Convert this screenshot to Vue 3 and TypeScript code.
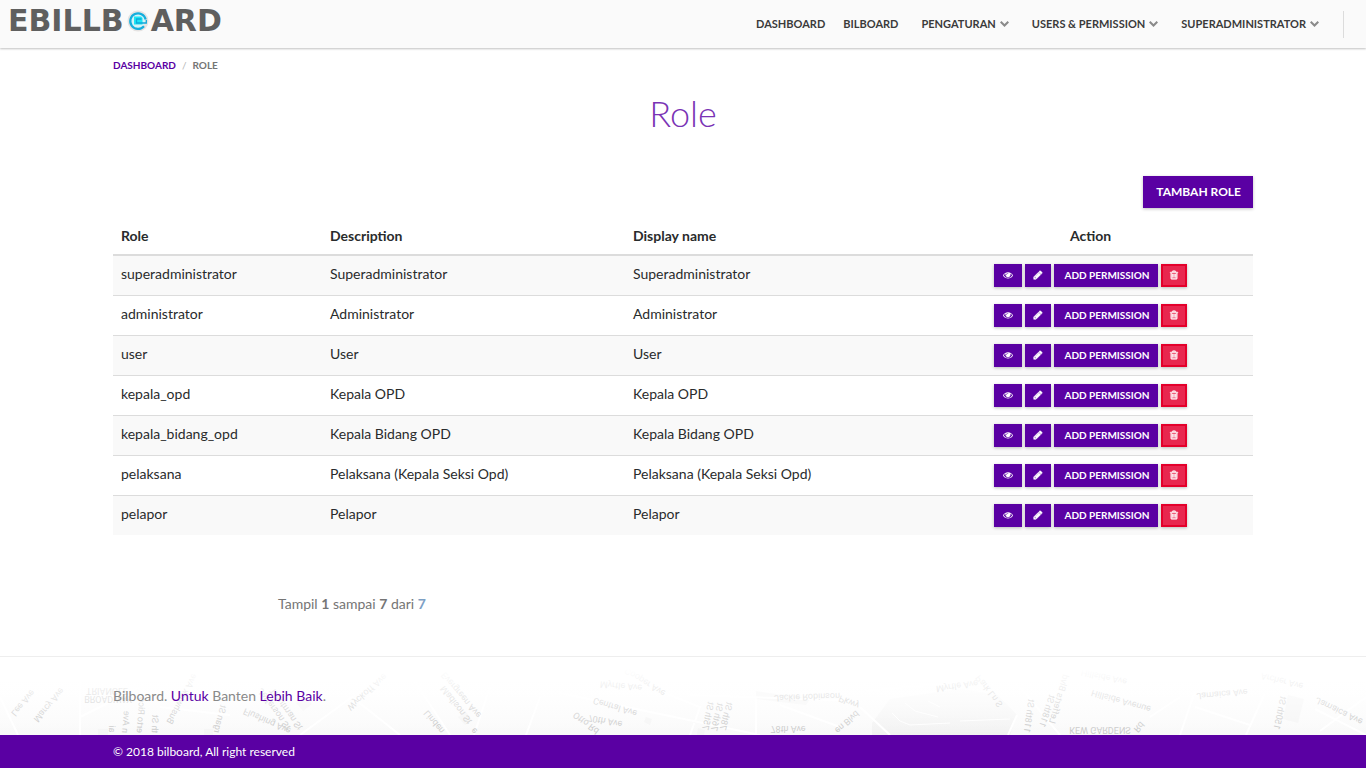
<script setup lang="ts">
interface NavItem {
  label: string
  menu: boolean
}

interface Role {
  name: string
  title: string
}

interface StreetLabel {
  text: string
  x: number
  y: number
  angle: number
}

const navItems: NavItem[] = [
  { label: 'DASHBOARD', menu: false },
  { label: 'BILBOARD', menu: false },
  { label: 'PENGATURAN', menu: true },
  { label: 'USERS & PERMISSION', menu: true },
  { label: 'SUPERADMINISTRATOR', menu: true },
]

const roles: Role[] = [
  { name: 'superadministrator', title: 'Superadministrator' },
  { name: 'administrator', title: 'Administrator' },
  { name: 'user', title: 'User' },
  { name: 'kepala_opd', title: 'Kepala OPD' },
  { name: 'kepala_bidang_opd', title: 'Kepala Bidang OPD' },
  { name: 'pelaksana', title: 'Pelaksana (Kepala Seksi Opd)' },
  { name: 'pelapor', title: 'Pelapor' },
]

const streets: StreetLabel[] = [
  { text: 'Lee Ave', x: 23, y: 46, angle: -50 },
  { text: 'Marcy Ave', x: 49, y: 48, angle: -50 },
  { text: 'TRIANGLE', x: 107, y: 34, angle: 0 },
  { text: 'BROADWAY', x: 108, y: 42, angle: 0 },
  { text: 'ai', x: 112, y: 72, angle: -88 },
  { text: 'n Ave', x: 126, y: 65, angle: -85 },
  { text: 'erto Rico', x: 141, y: 58, angle: -86 },
  { text: 'th St', x: 155, y: 67, angle: -88 },
  { text: 'Bushwick Ave', x: 182, y: 42, angle: -62 },
  { text: 'rgan St', x: 220, y: 62, angle: -76 },
  { text: 'Flushing Ave', x: 267, y: 64, angle: 24 },
  { text: 'Jefferson St', x: 274, y: 52, angle: 54 },
  { text: 'Troutman St', x: 286, y: 52, angle: 54 },
  { text: 'Wyckoff Ave', x: 367, y: 35, angle: -42 },
  { text: 'Linden', x: 434, y: 65, angle: 50 },
  { text: 'Evergreen Ave', x: 461, y: 38, angle: 50 },
  { text: 'Madison St', x: 456, y: 48, angle: 52 },
  { text: 'e', x: 474, y: 74, angle: 50 },
  { text: 'Myrtle Ave', x: 621, y: 29, angle: 5 },
  { text: 'Cooper Ave', x: 645, y: 25, angle: 32 },
  { text: 'Central Ave', x: 615, y: 50, angle: 17 },
  { text: '70th Ave', x: 605, y: 64, angle: 11 },
  { text: 'Otto Rd', x: 586, y: 66, angle: 38 },
  { text: '75th St', x: 708, y: 59, angle: -78 },
  { text: '76th St', x: 717, y: 60, angle: -76 },
  { text: '78th St', x: 726, y: 59, angle: -75 },
  { text: '78th Ave', x: 788, y: 72, angle: 0 },
  { text: 'Jackie Robinson', x: 807, y: 40, angle: -2 },
  { text: 'Pkwy', x: 849, y: 45, angle: 22 },
  { text: 'en Blvd', x: 847, y: 65, angle: -42 },
  { text: 'Myrtle Ave', x: 957, y: 29, angle: -8 },
  { text: 'Park Ln S', x: 989, y: 34, angle: 52 },
  { text: '118th St', x: 1029, y: 59, angle: -82 },
  { text: '118th St', x: 1047, y: 54, angle: -72 },
  { text: 'Lefferts Blvd', x: 1059, y: 42, angle: -74 },
  { text: 'Hillside Ave', x: 1104, y: 20, angle: 12 },
  { text: 'Hillside Avenue', x: 1121, y: 44, angle: 16 },
  { text: 'KEW GARDENS', x: 1100, y: 73, angle: 0 },
  { text: 'Rd', x: 1139, y: 70, angle: -48 },
  { text: 'Jamaica Ave', x: 1222, y: 37, angle: -5 },
  { text: 'Archer Ave', x: 1282, y: 24, angle: 14 },
  { text: '150th St', x: 1280, y: 56, angle: -78 },
  { text: 'Jamaica Ave', x: 1339, y: 54, angle: 26 },
]
</script>

<template>
  <div class="page">
    <header class="topbar">
      <a href="#" class="brand" aria-label="EBILLBOARD">
        <span>EBILLB</span>
        <svg class="brand-mark" viewBox="0 0 24 24" aria-hidden="true">
          <circle cx="12" cy="12" r="10.500" fill="#e6e3e2" />
          <circle cx="12" cy="12" r="7" fill="#d5f3f7" />
          <path d="M18 17.200A7.800 7.800 0 1 1 19.700 10.500" fill="none" stroke="#14aedd" stroke-width="2.200" />
          <path d="M8 7.500h7l1.500 1.500v6.500h-8.500z" fill="#1be6f5" />
          <path d="M15.500 10h-5v4h9.800v-3" fill="none" stroke="#0fa9da" stroke-width="1.300" />
        </svg>
        <span>ARD</span>
      </a>
      <nav class="menu" aria-label="Utama">
        <template v-for="item in navItems" :key="item.label">
          <button v-if="item.menu" type="button" class="menu-item">
            {{ item.label }}
            <svg viewBox="0 0 9 6" class="chevron" aria-hidden="true">
              <path d="M.7 .8L4.500 4.500L8.300 .8" fill="none" stroke="#8a8a8a" stroke-width="2.100" />
            </svg>
          </button>
          <a v-else href="#" class="menu-item">{{ item.label }}</a>
        </template>
        <span class="divider"></span>
      </nav>
    </header>

    <main class="container">
      <nav class="crumbs" aria-label="Breadcrumb">
        <a href="#">DASHBOARD</a>
        <span class="slash">/</span>
        <span>ROLE</span>
      </nav>
      <h1>Role</h1>
      <div class="toolbar">
        <button type="button" class="btn btn-add">TAMBAH ROLE</button>
      </div>

      <table>
        <colgroup>
          <col class="col-role" />
          <col class="col-text" />
          <col class="col-text" />
          <col />
        </colgroup>
        <thead>
          <tr>
            <th scope="col">Role</th>
            <th scope="col">Description</th>
            <th scope="col">Display name</th>
            <th scope="col" class="center">Action</th>
          </tr>
        </thead>
        <tbody>
          <tr v-for="role in roles" :key="role.name">
            <td>{{ role.name }}</td>
            <td>{{ role.title }}</td>
            <td>{{ role.title }}</td>
            <td>
              <div class="actions">
                <button type="button" class="btn btn-eye" aria-label="Lihat">
                  <svg viewBox="0 0 1792 1792" class="icon" aria-hidden="true"><path d="M1664 960q-152-236-381-353 61 104 61 225 0 185-131.500 316.500t-316.500 131.500-316.500-131.500-131.500-316.500q0-121 61-225-229 117-381 353 133 205 333.500 326.500t434.500 121.500 434.500-121.500 333.500-326.500zm-720-384q0-20-14-34t-34-14q-125 0-214.500 89.500t-89.500 214.500q0 20 14 34t34 14 34-14 14-34q0-86 61-147t147-61q20 0 34-14t14-34zm848 384q0 34-20 69-140 230-376.500 368.500t-499.500 138.500-499.500-139-376.500-368q-20-35-20-69t20-69q140-229 376.500-368t499.500-139 499.500 139 376.500 368q20 35 20 69z" /></svg>
                </button>
                <button type="button" class="btn btn-icon" aria-label="Ubah">
                  <svg viewBox="0 0 1792 1792" class="icon bold" aria-hidden="true"><path d="M491 1536l91-91-235-235-91 91v107h128v128h107zm523-928q0-22-22-22-10 0-17 7l-542 542q-7 7-7 17 0 22 22 22 10 0 17-7l542-542q7-7 7-17zm-54-192l416 416-832 832h-416v-416zm683 96q0 53-37 90l-166 166-416-416 166-165q36-38 90-38 53 0 91 38l235 234q37 39 37 91z" /></svg>
                </button>
                <button type="button" class="btn btn-permission">ADD PERMISSION</button>
                <button type="button" class="btn btn-icon btn-danger" aria-label="Hapus">
                  <svg viewBox="0 0 1792 1792" class="icon bold" aria-hidden="true"><path d="M704 736v576q0 14-9 23t-23 9h-64q-14 0-23-9t-9-23v-576q0-14 9-23t23-9h64q14 0 23 9t9 23zm256 0v576q0 14-9 23t-23 9h-64q-14 0-23-9t-9-23v-576q0-14 9-23t23-9h64q14 0 23 9t9 23zm256 0v576q0 14-9 23t-23 9h-64q-14 0-23-9t-9-23v-576q0-14 9-23t23-9h64q14 0 23 9t9 23zm128 724v-948h-896v948q0 22 7 40.500t14.500 27 10.500 8.500h832q3 0 10.500-8.500t14.500-27 7-40.500zm-672-1076h448l-48-117q-7-9-17-11h-317q-10 2-17 11zm928 32v64q0 14-9 23t-23 9h-96v948q0 83-47 143.500t-113 60.500h-832q-66 0-113-58.500t-47-141.500v-952h-96q-14 0-23-9t-9-23v-64q0-14 9-23t23-9h309l70-167q15-37 54-63t79-26h320q40 0 79 26t54 63l70 167h309q14 0 23 9t9 23z" /></svg>
                </button>
              </div>
            </td>
          </tr>
        </tbody>
      </table>

      <p class="summary">Tampil <b>1</b> sampai <b>7</b> dari <b class="total">7</b></p>
    </main>

    <footer>
      <div class="footer-top">
        <svg class="map" viewBox="0 0 1366 78" preserveAspectRatio="xMidYMax slice" aria-hidden="true">
          <defs>
            <linearGradient id="land" x1="0" y1="0" x2="0" y2="1">
              <stop offset="0.300" stop-color="#fff" />
              <stop offset="1" stop-color="#f9f9f9" />
            </linearGradient>
            <linearGradient id="park" x1="0" y1="0" x2="0" y2="1">
              <stop offset="0" stop-color="#fbfbfb" />
              <stop offset="1" stop-color="#f1f1f1" />
            </linearGradient>
            <linearGradient id="haze" x1="0" y1="0" x2="0" y2="1">
              <stop offset="0.150" stop-color="#fff" />
              <stop offset="1" stop-color="#fff" stop-opacity="0" />
            </linearGradient>
          </defs>
          <rect width="1366" height="78" fill="url(#land)" />
          <path d="M872 66L890 42L960 32L998 38L1017 58L1010 78H872z" fill="url(#park)" />
          <path d="M98 72h10v6H98zM204 72h9v6h-9zM296 46l9-7 7 8-9 7zM458 60l8-5 5 7-6 6zM646 60l6 2-2 6-6-3zM698 71l7 2-1 5h-7zM1288 38l16 4-6 24-15-4zM756 34l54 8-4 6-50-6z" fill="#f5f5f5" />
          <g fill="none" stroke="#fff" stroke-width="2">
            <path d="M0 40L18 78M80 20V78M80 60L140 30M160 50L230 58M300 78L352 40L400 78M412 20L450 78M490 30L474 78M540 40L526 78M560 36L760 78M640 26L700 50L690 78M690 38L860 44M756 40V78M780 48L840 70M860 50L890 78M866 34L1010 20M1017 58L1008 78M1020 30L1060 78M1150 60L1180 40M1195 34L1180 78M1195 50L1250 68M1265 36L1246 78M1315 52L1366 78M1320 74L1366 40" />
            <path d="M892 56L900 64L910 68L950 66M905 46L915 54L938 60M928 44L940 50M960 64L1010 62" stroke-width="1" />
          </g>
          <g class="streets">
            <text
              v-for="(street, index) in streets"
              :key="index"
              :transform="`translate(${street.x} ${street.y}) rotate(${street.angle}) scale(1 -1)`"
              text-anchor="middle"
              dominant-baseline="central"
            >{{ street.text }}</text>
          </g>
          <rect width="1366" height="78" fill="url(#haze)" />
        </svg>
        <p class="container tagline">Bilboard. <a href="#">Untuk</a> Banten <a href="#">Lebih Baik</a>.</p>
      </div>
      <div class="footer-bottom">
        <p class="container">© 2018 bilboard, All right reserved</p>
      </div>
    </footer>
  </div>
</template>

<style>
body {
  margin: 0;
  background: #fff;
}
</style>

<style scoped>
.page {
  display: flex;
  flex-direction: column;
  min-height: 100vh;
  font-family: Lato, "Liberation Sans", sans-serif;
  font-size: 14px;
  line-height: 20px;
  color: #292b2c;
}

.page * {
  box-sizing: border-box;
}

a {
  color: #5a00a3;
  text-decoration: none;
}

p {
  margin: 0;
}

button {
  font-family: inherit;
  cursor: pointer;
}

.topbar {
  display: flex;
  justify-content: space-between;
  align-items: center;
  height: 48px;
  padding: 0 22px 0 8px;
  background: #fafafa;
  box-shadow: 0 1px 2px rgba(0, 0, 0, 0.25);
}

.brand {
  display: flex;
  align-items: center;
  padding-bottom: 6px;
  font-family: "DejaVu Sans", sans-serif;
  font-size: 30px;
  font-weight: 700;
  line-height: 40px;
  color: #5f5f5f;
}

.brand-mark {
  width: 24px;
  height: 24px;
  margin: 0 1px 0 2px;
}

.menu {
  display: flex;
  align-items: center;
  gap: 23px;
}

.menu-item {
  display: flex;
  align-items: center;
  gap: 4px;
  padding: 0;
  border: 0;
  background: none;
  font-size: 11px;
  font-weight: 700;
  line-height: 20px;
  color: #3a3a3a;
}

.menu-item:first-child {
  margin-right: -5px;
}

.chevron {
  width: 9px;
  height: 6px;
}

.divider {
  width: 1px;
  height: 27px;
  margin-left: 1px;
  background: #dcdcdc;
}

.container {
  width: 100%;
  max-width: 1140px;
  margin: 0 auto;
}

main {
  flex: 1;
}

.crumbs {
  display: flex;
  gap: 6px;
  padding-top: 7px;
  font-size: 10px;
  font-weight: 700;
  color: #757575;
}

.slash {
  font-weight: 400;
  color: #b5b5b5;
}

h1 {
  margin: 16px 0 0;
  font-size: 36px;
  font-weight: 300;
  line-height: 44px;
  text-align: center;
  color: #7a33b5;
}

.toolbar {
  display: flex;
  justify-content: flex-end;
  margin-top: 41px;
}

.btn {
  display: flex;
  align-items: center;
  justify-content: center;
  height: 23px;
  padding: 0 0 1px;
  border: 0;
  background: #5a00a3;
  box-shadow: 0 1px 3px rgba(0, 0, 0, 0.25);
  font-size: 10px;
  font-weight: 700;
  white-space: nowrap;
  color: #fff;
}

.btn-add {
  height: 32px;
  padding: 0 12px 2px 13px;
  font-size: 12px;
}

.btn-eye {
  width: 28px;
}

.btn-icon {
  width: 26px;
}

.btn-permission {
  padding: 0 8px 2px 10px;
}

.btn-danger {
  border: 2px solid #e4002b;
  background: #e8274f;
}

.icon {
  width: 10px;
  height: 10px;
  fill: #fff;
}

.bold {
  stroke: #fff;
  stroke-width: 90;
}

table {
  width: 100%;
  margin-top: 10px;
  border-spacing: 0;
  table-layout: fixed;
}

.col-role {
  width: 209px;
}

.col-text {
  width: 303px;
}

th {
  padding: 8px;
  border-bottom: 2px solid #dcdcdc;
  font-weight: 700;
  text-align: left;
}

.center {
  text-align: center;
}

td {
  height: 40px;
  padding: 8px 8px 0;
  border-top: 1px solid #dcdcdc;
  vertical-align: top;
}

tbody tr:first-child td {
  height: 39px;
  border-top: 0;
}

tbody tr:nth-child(odd) {
  background: #f9f9f9;
}

.actions {
  display: flex;
  justify-content: center;
  gap: 3px;
}

.summary {
  padding: 59px 0 42px 165px;
  color: #757575;
}

.total {
  color: #7da0c4;
}

.footer-top {
  position: relative;
  height: 79px;
  border-top: 1px solid #eee;
}

.map {
  position: absolute;
  inset: 0;
  width: 100%;
  height: 100%;
}

.streets {
  font-family: Roboto, sans-serif;
  font-size: 9px;
  fill: #c8c8c8;
}

.tagline {
  position: relative;
  padding-top: 29px;
  color: #8a8a8a;
}

.footer-bottom {
  padding: 7px 0 6px;
  background: #5a00a3;
  font-size: 12px;
  color: #fff;
}
</style>
